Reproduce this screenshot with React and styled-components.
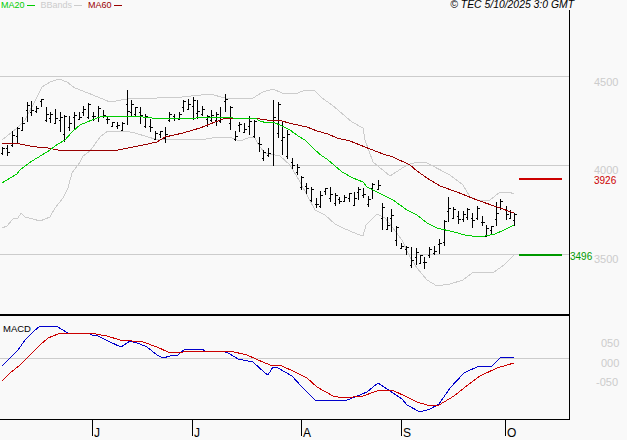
import React from 'react'
import styled, { createGlobalStyle } from 'styled-components'

const GlobalStyle = createGlobalStyle`
    html, body {
        margin: 0;
        padding: 0;
        background: #f9f9f9;
    }
`

const Page = styled.div`
    width: 627px;
    height: 440px;
    overflow: hidden;
    background: #f9f9f9;
    font-family: "Liberation Sans", Arial, sans-serif;
    font-size: 11px;
`
const Header = styled.div`
    display: flex;
    justify-content: space-between;
    height: 10px;
    line-height: 10px;
    padding: 0 53px 0 1px;
`
const Legend = styled.div`
    display: flex;
    gap: 6px;
    font-size: 9px;
`
const LegendItem = styled.div`
    display: flex;
    align-items: center;
    gap: 2px;
    color: ${(p) => p.$color};
`
const LegendLine = styled.span`
    width: 8px;
    height: 1px;
    background: ${(p) => p.$color};
`
const Stamp = styled.div`
    font-size: 10.4px;
    font-style: italic;
    color: #000;
    white-space: nowrap;
`
const Body = styled.div`
    display: flex;
    height: 430px;
`
const Plot = styled.div`
    width: 569px;
    border-right: 1px solid #000;
    height: 410px;
`
const PricePanel = styled.svg`
    display: block;
    width: 569px;
    height: 304px;
    border-bottom: 2px solid #000;
`
const MacdPanel = styled.svg`
    display: block;
    width: 569px;
    height: 103px;
    border-bottom: 1px solid #000;
`
const TimeAxis = styled.svg`
    display: block;
    width: 569px;
    height: 20px;
    overflow: visible;
`
const Axis = styled.div`
    position: relative;
    flex: 1;
`
const AxisLabel = styled.span`
    position: absolute;
    left: ${(p) => p.$left}px;
    top: ${(p) => p.$top - 10}px;
    font-size: ${(p) => p.$size || 11}px;
    line-height: 9px;
    color: ${(p) => p.$color || '#cccccc'};
`
const Line = styled.polyline`
    fill: none;
    stroke: ${(p) => p.$color};
    stroke-width: ${(p) => p.$width || 1};
    shape-rendering: crispEdges;
`
const Rule = styled.line`
    stroke: ${(p) => p.$color || '#cccccc'};
    stroke-width: ${(p) => p.$width || 1};
    shape-rendering: crispEdges;
`
const Bar = styled.path`
    fill: none;
    stroke: #000;
    stroke-width: 1;
    shape-rendering: crispEdges;
`
const PanelTitle = styled.text`
    font-family: "Liberation Sans", Arial, sans-serif;
    font-size: 9.5px;
    fill: #000;
`
const TickLetter = styled.text`
    font-family: "Liberation Sans", Arial, sans-serif;
    font-size: 12px;
    fill: #000;
`

// x, high, low in page pixels
const bars = [
    [2,147,155],[7,145,156],[12,131,147],[17,127,143],[22,117,131],[27,102,122],[31,101,116],[36,106,113],
    [41,99,107],[46,107,122],[50,112,123],[55,109,124],[60,112,132],[64,115,142],[69,116,131],[74,112,129],
    [79,112,120],[83,106,116],[88,103,119],[93,112,121],[98,106,122],[103,110,118],[107,117,124],[112,122,127],
    [117,122,129],[122,122,131],[127,90,125],[131,100,117],[135,107,116],[140,107,124],[145,114,128],[150,119,132],
    [155,131,140],[160,131,138],[165,127,143],[169,112,122],[174,114,121],[179,112,120],[183,100,112],[188,99,110],
    [193,97,120],[197,100,119],[202,106,116],[207,115,127],[211,110,122],[216,112,126],[220,107,123],[225,94,112],
    [230,106,130],[235,131,141],[239,122,132],[244,123,133],[249,116,135],[254,120,138],[259,137,152],[263,150,161],
    [268,148,157],[273,100,166],[278,102,138],[282,122,155],[287,130,159],[292,158,169],[297,164,175],[301,176,190],
    [306,183,194],[311,187,202],[316,198,208],[320,191,208],[325,188,195],[330,187,202],[335,193,206],[339,197,204],
    [344,195,202],[349,193,202],[354,192,206],[358,187,200],[363,188,198],[368,196,207],[372,183,199],[378,180,190],
    [382,203,230],[387,217,230],[391,209,232],[396,226,246],[401,243,249],[406,246,255],[411,247,268],[416,248,265],
    [420,255,264],[424,257,269],[429,247,258],[434,246,255],[439,239,254],[444,220,246],[448,197,222],[453,207,219],
    [458,211,224],[463,211,222],[467,208,220],[472,213,228],[477,206,220],[482,216,226],[486,225,237],[491,226,235],
    [496,202,226],[500,199,210],[506,206,220],[510,210,219],[514,213,226],
]

const openShare = [0.75, 0.3, 0.85, 0.55, 0.9, 0.4, 0.7]
const closeShare = [0.15, 0.6, 0.25, 0.05, 0.45]

const ma20 = '2,183 10,178 17,174 20,170 25,166 32,161 42,155 50,150 55,146 65,140 72,132 80,125 92,120 100,117 110,116 118,117 133,116 152,118 167,118 185,119 207,117 220,117 233,118 248,118 255,118 260,121 267,123 273,122 282,126 290,130 298,136 305,140 315,150 322,156 327,159 342,172 353,178 363,182 367,187 383,195 393,200 407,210 417,215 427,223 437,228 454,232 465,235 472,236 485,236 495,234 504,230 514,225'
const ma60 = '2,143 10,143 20,144 30,146 37,147 48,148 58,150 68,151 77,150 118,150 133,147 143,145 157,142 165,137 183,133 200,128 210,124 223,119 247,118 260,119 267,120 278,120 293,124 307,127 317,131 328,134 337,138 350,141 365,147 383,154 393,157 410,165 417,171 427,178 440,186 457,192 477,200 497,207 514,213'
const bandUp = '2,140 17,128 25,120 37,97 42,87 50,82 59,79 67,82 75,88 88,93 110,102 127,99 157,98 182,97 210,94 225,98 253,98 263,92 273,89 282,93 298,93 305,90 315,91 322,98 332,105 352,122 363,128 365,140 373,162 390,176 407,165 417,162 427,163 450,175 463,185 470,197 480,201 490,200 500,192 509,192 514,194'
const bandLow = '2,228 7,226 13,219 18,218 21,213 25,217 33,219 40,221 50,217 55,208 63,198 68,188 72,173 80,162 83,156 90,151 100,137 108,131 125,131 135,133 148,137 155,139 183,139 200,140 218,137 230,137 237,140 243,140 250,137 255,138 260,147 265,153 280,156 290,165 300,182 315,210 325,215 335,224 343,228 357,234 363,236 366,225 377,214 385,218 393,228 402,240 410,257 417,268 427,280 437,286 450,284 463,280 472,273 494,272 504,265 514,255'
const macd = '2,366 10,358 18,350 25,340 33,332 40,326 56,326 68,333 88,333 92,335 98,336 110,342 121,347 130,341 140,344 147,347 157,355 163,358 170,356 178,355 185,349 202,349 205,351 223,351 230,354 238,359 253,362 265,373 268,375 273,367 278,368 292,376 302,387 315,400 337,401 347,400 355,397 367,392 378,383 390,391 402,399 407,405 420,412 430,409 439,404 450,388 464,373 479,366 492,366 500,358 514,357'
const signal = '2,381 10,373 20,365 27,358 40,345 48,338 58,334 67,333 90,333 107,336 120,340 132,341 143,342 157,347 168,352 183,352 193,351 210,351 230,351 247,355 258,360 270,365 282,366 295,372 307,378 317,387 333,396 343,398 363,396 377,391 392,390 407,397 417,402 427,405 439,405 454,396 464,388 480,376 497,368 514,363'

const ticks = [
    { x: 92, label: 'J' },
    { x: 192, label: 'J' },
    { x: 301, label: 'A' },
    { x: 401, label: 'S' },
    { x: 505, label: 'O' },
]

const barPath = ([x, high, low], i) => {
    const px = x + 0.5
    const open = Math.round(low - (low - high) * (1 - openShare[i % 7])) + 0.5
    const close = Math.round(high + (low - high) * closeShare[i % 5]) + 0.5
    return `M${px} ${high}V${low}M${px - 2} ${open}H${px}M${px} ${close}H${px + 2}`
}

const App = () => {
    return (
        <Page>
            <GlobalStyle />
            <Header>
                <Legend>
                    <LegendItem $color="#00cc00">MA20<LegendLine $color="#00cc00" /></LegendItem>
                    <LegendItem $color="#cccccc">BBands<LegendLine $color="#cccccc" /></LegendItem>
                    <LegendItem $color="#990000">MA60<LegendLine $color="#990000" /></LegendItem>
                </Legend>
                <Stamp>© TEC 5/10/2025 3:0 GMT</Stamp>
            </Header>
            <Body>
                <Plot>
                    <PricePanel viewBox="0 10 569 304">
                        <Rule x1="0" x2="569" y1="76.5" y2="76.5" />
                        <Rule x1="0" x2="569" y1="165.5" y2="165.5" />
                        <Rule x1="0" x2="569" y1="254.5" y2="254.5" />
                        <Line points={bandUp} $color="#cccccc" />
                        <Line points={bandLow} $color="#cccccc" />
                        {bars.map((bar, i) => <Bar key={bar[0]} d={barPath(bar, i)} />)}
                        <Line points={ma60} $color="#990000" />
                        <Line points={ma20} $color="#00cc00" />
                        <Rule x1="519" x2="562" y1="179" y2="179" $color="#cc0000" $width="2" />
                        <Rule x1="519" x2="562" y1="255" y2="255" $color="#009900" $width="2" />
                    </PricePanel>
                    <MacdPanel viewBox="0 316 569 103">
                        <Rule x1="0" x2="569" y1="358.5" y2="358.5" />
                        <PanelTitle x="3" y="332">MACD</PanelTitle>
                        <Line points={macd} $color="#0000cc" />
                        <Line points={signal} $color="#cc0000" />
                    </MacdPanel>
                    <TimeAxis viewBox="0 420 569 20">
                        {ticks.map((t) => (
                            <g key={t.x}>
                                <Rule x1={t.x + 0.5} x2={t.x + 0.5} y1="420" y2="436" $color="#000" />
                                <TickLetter x={t.x + 2} y="437">{t.label}</TickLetter>
                            </g>
                        ))}
                    </TimeAxis>
                </Plot>
                <Axis>
                    <AxisLabel $left={24} $top={78}>4500</AxisLabel>
                    <AxisLabel $left={24} $top={166}>4000</AxisLabel>
                    <AxisLabel $left={24} $top={176} $size={10} $color="#cc0000">3926</AxisLabel>
                    <AxisLabel $left={0} $top={252} $size={10} $color="#009900">3496</AxisLabel>
                    <AxisLabel $left={24} $top={255}>3500</AxisLabel>
                    <AxisLabel $left={31} $top={339}>050</AxisLabel>
                    <AxisLabel $left={31} $top={359}>000</AxisLabel>
                    <AxisLabel $left={26} $top={378}>-050</AxisLabel>
                </Axis>
            </Body>
        </Page>
    )
}

export default App
